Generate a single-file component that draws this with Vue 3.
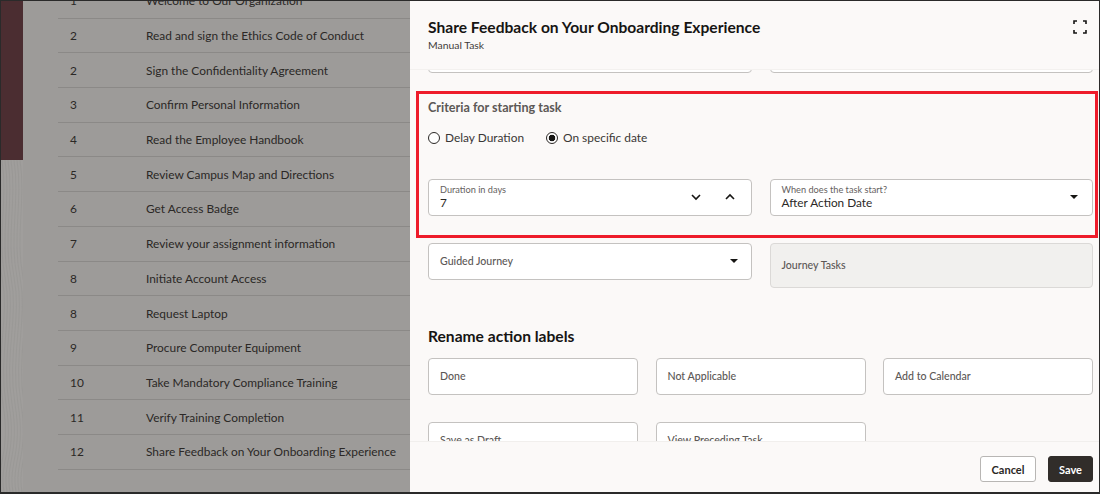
<script setup>
const tasks = [
  ['1', 'Welcome to Our Organization'],
  ['2', 'Read and sign the Ethics Code of Conduct'],
  ['2', 'Sign the Confidentiality Agreement'],
  ['3', 'Confirm Personal Information'],
  ['4', 'Read the Employee Handbook'],
  ['5', 'Review Campus Map and Directions'],
  ['6', 'Get Access Badge'],
  ['7', 'Review your assignment information'],
  ['8', 'Initiate Account Access'],
  ['8', 'Request Laptop'],
  ['9', 'Procure Computer Equipment'],
  ['10', 'Take Mandatory Compliance Training'],
  ['11', 'Verify Training Completion'],
  ['12', 'Share Feedback on Your Onboarding Experience'],
]
const contours = [0, 1, 2, 3, 4, 5, 6, 7].map((i) => {
  const x = i * 3 - 2
  return `M${x} 0 C${x + 6} 40 ${x - 5} 80 ${x + 3} 120 S${x - 4} 200 ${x + 4} 250 S${x - 3} 310 ${x + 2} 340`
})
</script>

<template>
  <div class="screen">
    <div class="backdrop">
      <aside class="rail">
        <div class="rail-top"></div>
        <svg class="rail-texture" viewBox="0 0 22 340" preserveAspectRatio="none" aria-hidden="true">
          <path v-for="d in contours" :key="d" :d="d" />
        </svg>
      </aside>
      <main class="table">
        <div v-for="(t, i) in tasks" :key="i" class="row">
          <span class="num">{{ t[0] }}</span>
          <span class="name">{{ t[1] }}</span>
        </div>
      </main>
    </div>

    <section class="drawer">
      <header class="head">
        <div>
          <h1>Share Feedback on Your Onboarding Experience</h1>
          <p>Manual Task</p>
        </div>
        <svg class="expand" width="14" height="14" viewBox="0 0 14 14" aria-hidden="true">
          <path d="M1 4V1h3M10 1h3v3M13 10v3h-3M4 13H1v-3" />
        </svg>
      </header>

      <div class="content">
        <div class="two peek">
          <div class="field"></div>
          <div class="field"></div>
        </div>

        <div class="criteria">
          <h2>Criteria for starting task</h2>
          <div class="radios">
            <label class="radio"><i class="dot"></i>Delay Duration</label>
            <label class="radio"><i class="dot on"></i>On specific date</label>
          </div>
          <div class="two">
            <div class="field stacked">
              <div>
                <small>Duration in days</small>
                <b>7</b>
              </div>
              <span class="steppers">
                <svg width="12" height="8" viewBox="0 0 12 8" aria-hidden="true"><path d="M2 2l4 4 4-4" /></svg>
                <svg width="12" height="8" viewBox="0 0 12 8" aria-hidden="true"><path d="M2 6l4-4 4 4" /></svg>
              </span>
            </div>
            <div class="field stacked">
              <div>
                <small>When does the task start?</small>
                <b>After Action Date</b>
              </div>
              <i class="caret wide"></i>
            </div>
          </div>
        </div>

        <div class="two journey">
          <div class="field"><span>Guided Journey</span><i class="caret"></i></div>
          <div class="field disabled"><span>Journey Tasks</span></div>
        </div>

        <h3>Rename action labels</h3>
        <div class="three">
          <div class="field"><span>Done</span></div>
          <div class="field"><span>Not Applicable</span></div>
          <div class="field"><span>Add to Calendar</span></div>
          <div class="field"><span>Save as Draft</span></div>
          <div class="field"><span>View Preceding Task</span></div>
        </div>
      </div>

      <footer class="foot">
        <button class="btn">Cancel</button>
        <button class="btn primary">Save</button>
      </footer>
    </section>
  </div>
</template>

<style>
html, body { margin: 0; padding: 0; background: #222; }
</style>

<style scoped>
* { box-sizing: border-box; }
.screen {
  width: 1100px;
  height: 494px;
  display: flex;
  overflow: hidden;
  border-top: 1px solid #2a2a2a;
  border-bottom: 2px solid #2a2a2a;
  border-left: 1px solid #2a2a2a;
  border-right: 1px solid #2a2a2a;
  font-family: Lato, "Noto Sans", sans-serif;
  color: #2b2826;
}
.backdrop {
  width: 409px;
  flex: none;
  display: flex;
  background: #9d9b99;
}
.rail {
  width: 22px;
  flex: none;
  display: flex;
  flex-direction: column;
}
.rail-top { height: 159px; flex: none; background: #4b2d31; }
.rail-texture { flex: 1; width: 100%; min-height: 0; background: #a09e9c; }
.rail-texture path { fill: none; stroke: #8f8d8b; stroke-width: 0.5; opacity: 0.7; }
.table {
  flex: 1;
  padding-left: 35px;
  margin-top: -17px;
  min-width: 0;
}
.row {
  height: 34.7px;
  display: flex;
  align-items: center;
  border-bottom: 1px solid #8b8987;
  font-size: 11.9px;
}
.num { width: 88px; padding-left: 12px; flex: none; }
.name { white-space: nowrap; }

.drawer {
  flex: 1;
  display: flex;
  flex-direction: column;
  background: #fbf9f8;
  min-width: 0;
}
.head {
  height: 69px;
  flex: none;
  padding: 16px 12px 0 18px;
  display: flex;
  justify-content: space-between;
  align-items: flex-start;
  border-bottom: 1px solid #f3f1ef;
  position: relative;
  z-index: 1;
  background: #fbf9f8;
}
.head h1 {
  margin: 0;
  font-size: 15.6px;
  line-height: 20px;
  font-weight: 700;
  color: #161513;
}
.head p {
  margin: 1px 0 0;
  font-size: 10.4px;
  line-height: 14px;
  color: #3f3c3a;
}
.expand { margin-top: 3px; }
.expand path { fill: none; stroke: #161513; stroke-width: 1.6; }

.content {
  flex: 1;
  min-height: 0;
  overflow: hidden;
  padding: 0 6px 0 18px;
}
.two {
  display: grid;
  grid-template-columns: 324px 323.5px;
  gap: 17.5px;
  align-items: start;
}
.peek { margin-top: -34px; height: 37px; }
.field {
  height: 37px;
  background: #fff;
  border: 1px solid #c4c2c0;
  border-radius: 4px;
  padding: 0 11px 1px;
  display: flex;
  align-items: center;
  justify-content: space-between;
  font-size: 10.6px;
  font-weight: 500;
  color: #5c5856;
}
.criteria {
  margin: 17.5px -5px 5.5px -12px;
  height: 147px;
  border: 3px solid #ee1c2b;
  padding: 4px 2px 0 9px;
}
.criteria h2 {
  margin: 0;
  font-size: 12.6px;
  line-height: 20px;
  font-weight: 700;
  color: #5c5856;
}
.radios {
  display: flex;
  gap: 22px;
  margin-top: 10px;
  height: 20px;
}
.radio {
  display: flex;
  align-items: center;
  gap: 5px;
  font-size: 11.9px;
  color: #3a3735;
}
.dot {
  width: 12px;
  height: 12px;
  border-radius: 50%;
  border: 1px solid #2b2826;
  background: #fff;
  display: block;
}
.dot.on { border-width: 1px; background: radial-gradient(circle, #161513 3px, #fff 3.6px); }
.criteria .two { margin-top: 31px; }
.stacked small {
  display: block;
  font-size: 9.2px;
  line-height: 12px;
  color: #65615e;
  font-weight: 400;
}
.stacked b {
  display: block;
  font-size: 11.8px;
  line-height: 13px;
  font-weight: 400;
  color: #2b2826;
}
.stacked { padding: 0 11px 1px; }
.steppers { display: flex; gap: 22px; margin-right: 4px; }
.steppers path { fill: none; stroke: #161513; stroke-width: 1.6; }
.caret {
  width: 0;
  height: 0;
  border-left: 4px solid transparent;
  border-right: 4px solid transparent;
  border-top: 4px solid #161513;
  margin-right: 2px;
}
.caret.wide { margin-right: 3px; }
.journey { margin-top: 0; }
.disabled { height: 45px; background: #f1f0ee; border-color: #dbd9d7; justify-content: flex-start; }
h3 {
  margin: 38px 0 0;
  font-size: 15.6px;
  line-height: 20px;
  font-weight: 700;
  color: #161513;
}
.three {
  display: grid;
  grid-template-columns: 210px 210px 210px;
  column-gap: 17.5px;
  row-gap: 27px;
  margin-top: 12px;
}
.foot {
  height: 51px;
  flex: none;
  border-top: 1px solid #f1efed;
  background: #fbf9f8;
  padding: 14px 6px 0 0;
  display: flex;
  justify-content: flex-end;
  gap: 12px;
}
.btn {
  height: 26px;
  width: 56px;
  font: 700 11px Lato, "Noto Sans", sans-serif;
  border: 1px solid #b8b6b4;
  border-radius: 3px;
  background: #fff;
  color: #2b2826;
  padding: 0;
}
.primary { width: 45px; background: #312d2a; border-color: #312d2a; color: #fff; }
</style>
